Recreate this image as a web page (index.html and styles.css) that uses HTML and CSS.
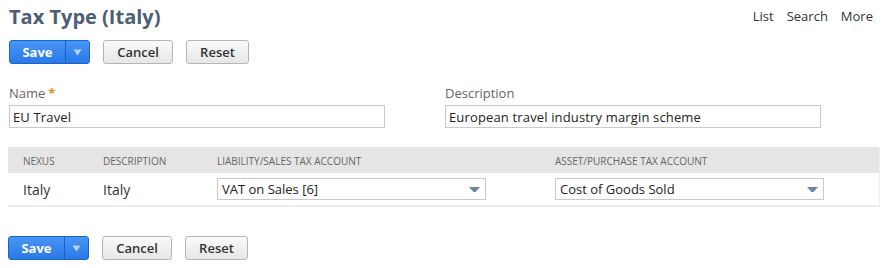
FILE: index.html
```html
<!DOCTYPE html>
<html>
<head>
<meta charset="utf-8">
<link rel="stylesheet" href="styles.css">
</head>
<body>
<div class="page">
  <div class="topbar">
    <h1 class="title">Tax Type (Italy)</h1>
    <nav class="links">
      <a>List</a><a>Search</a><a>More</a>
    </nav>
  </div>
  <div class="btnrow">
    <div class="savebtn"><span class="save">Save</span><span class="drop"><svg width="9" height="7" viewBox="0 0 9 7"><path d="M0.5 0.5 H8.5 L4.5 6.5 Z" fill="#b9d3f7"/></svg></span></div>
    <button class="btn">Cancel</button>
    <button class="btn">Reset</button>
  </div>
  <div class="fields">
    <div class="field">
      <label class="lbl">Name<span class="req">*</span></label>
      <div class="input">EU Travel</div>
    </div>
    <div class="field">
      <label class="lbl">Description</label>
      <div class="input">European travel industry margin scheme</div>
    </div>
  </div>
  <div class="table">
    <div class="thead">
      <div class="c1">NEXUS</div>
      <div class="c2">DESCRIPTION</div>
      <div class="c3">LIABILITY/SALES TAX ACCOUNT</div>
      <div class="c4">ASSET/PURCHASE TAX ACCOUNT</div>
    </div>
    <div class="trow">
      <div class="c1">Italy</div>
      <div class="c2">Italy</div>
      <div class="c3"><div class="select"><span>VAT on Sales [6]</span><svg width="11" height="5" viewBox="0 0 11 5"><path d="M0 0 H11 L6.5 5 H4.5 Z" fill="#6a87ab"/></svg></div></div>
      <div class="c4"><div class="select"><span>Cost of Goods Sold</span><svg width="11" height="5" viewBox="0 0 11 5"><path d="M0 0 H11 L6.5 5 H4.5 Z" fill="#6a87ab"/></svg></div></div>
    </div>
  </div>
  <div class="btnrow bottom">
    <div class="savebtn"><span class="save">Save</span><span class="drop"><svg width="9" height="7" viewBox="0 0 9 7"><path d="M0.5 0.5 H8.5 L4.5 6.5 Z" fill="#b9d3f7"/></svg></span></div>
    <button class="btn">Cancel</button>
    <button class="btn">Reset</button>
  </div>
</div>
</body>
</html>
```

FILE: styles.css
```css
* { box-sizing: border-box; }
html, body { margin: 0; padding: 0; background: #fff; }
body { font-family: "Open Sans", "Liberation Sans", sans-serif; font-size: 13px; color: #222; }
.page { padding: 0 10px 0 9px; width: 890px; }
.topbar { display: flex; justify-content: space-between; align-items: flex-start; height: 40px; }
.title { margin: 0; padding-top: 2px; font-size: 20px; font-weight: 700; color: #4d5e78; line-height: 30px; }
.links { display: flex; gap: 13px; padding-top: 7px; padding-right: 7px; }
.links a { font-size: 13px; color: #333; }
.btnrow { display: flex; align-items: center; gap: 13px; height: 24px; }
.savebtn { display: flex; width: 81px; height: 24px; border: 1px solid #1b63c6; border-radius: 3px; background: linear-gradient(#4795f5, #2a79e8); color: #fff; font-weight: 700; font-size: 13px; overflow: hidden; }
.save { width: 56px; display: flex; align-items: center; justify-content: center; border-right: 1px solid #1b5fbf; }
.drop { flex: 1; display: flex; align-items: center; justify-content: center; padding-top: 1px; }
.btn { height: 24px; padding: 0; border: 1px solid #b5b5b5; border-radius: 3px; background: linear-gradient(#fafafa, #e6e6e6); font-family: inherit; font-weight: 600; font-size: 13px; color: #333; }
.btnrow .btn:nth-of-type(1) { width: 70px; }
.btnrow .btn:nth-of-type(2) { width: 63px; }
.fields { display: flex; gap: 60px; margin-top: 19px; }
.field { width: 376px; }
.lbl { display: block; color: #666; font-size: 13px; line-height: 17px; height: 22px; padding-top: 2px; }
.req { color: #e88b1a; font-weight: 700; margin-left: 3px; }
.input { height: 23px; border: 1px solid #c9c9c9; padding: 1px 3px 0; line-height: 20px; font-size: 13px; color: #222; letter-spacing: 0.15px; }
.table { margin-top: 19px; margin-left: -1px; width: 872px; border-bottom: 2px solid #ececec; border-right: 1px solid #f0f0f0; }
.thead { display: flex; align-items: center; height: 26px; background: #e5e5e5; font-size: 10px; color: #666; padding-top: 1px; }
.trow { display: flex; align-items: center; height: 32px; }
.c1 { width: 95px; padding-left: 15px; }
.c2 { width: 114px; }
.c3 { width: 338px; }
.c4 { flex: 1; }
.trow .c1, .trow .c2 { font-size: 14px; color: #333; }
.select { display: flex; align-items: center; justify-content: space-between; width: 269px; height: 22px; border: 1px solid #c9c9c9; padding: 0 5px 0 4px; font-size: 13px; color: #222; }
.bottom { margin-top: 29px; margin-left: -1px; }
```
